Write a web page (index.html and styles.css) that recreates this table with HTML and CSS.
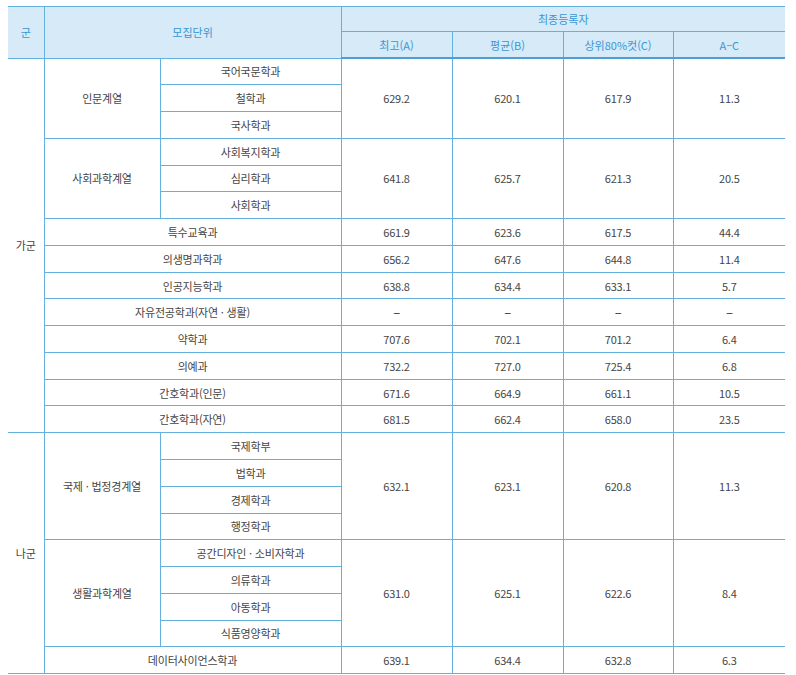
FILE: index.html
```html
<!DOCTYPE html>
<html lang="ko">
<head>
<meta charset="utf-8">
<link rel="stylesheet" href="styles.css">
</head>
<body>
<table class="grid">
  <colgroup>
    <col class="c-gun"><col class="c-series"><col class="c-dept">
    <col class="c-num"><col class="c-num"><col class="c-num2"><col class="c-num3">
  </colgroup>
  <thead>
    <tr class="h1">
      <th rowspan="2" class="first">군</th>
      <th rowspan="2" colspan="2">모집단위</th>
      <th colspan="4" class="last">최종등록자</th>
    </tr>
    <tr class="h2">
      <th>최고(A)</th>
      <th>평균(B)</th>
      <th>상위80%컷(C)</th>
      <th class="last">A–C</th>
    </tr>
  </thead>
  <tbody>
    <tr><td rowspan="14" class="first gun">가군</td><td rowspan="3">인문계열</td><td>국어국문학과</td><td rowspan="3">629.2</td><td rowspan="3">620.1</td><td rowspan="3">617.9</td><td rowspan="3" class="last">11.3</td></tr>
    <tr><td>철학과</td></tr>
    <tr><td>국사학과</td></tr>
    <tr><td rowspan="3">사회과학계열</td><td>사회복지학과</td><td rowspan="3">641.8</td><td rowspan="3">625.7</td><td rowspan="3">621.3</td><td rowspan="3" class="last">20.5</td></tr>
    <tr><td>심리학과</td></tr>
    <tr><td>사회학과</td></tr>
    <tr><td colspan="2">특수교육과</td><td>661.9</td><td>623.6</td><td>617.5</td><td class="last">44.4</td></tr>
    <tr><td colspan="2">의생명과학과</td><td>656.2</td><td>647.6</td><td>644.8</td><td class="last">11.4</td></tr>
    <tr><td colspan="2">인공지능학과</td><td>638.8</td><td>634.4</td><td>633.1</td><td class="last">5.7</td></tr>
    <tr><td colspan="2">자유전공학과(자연 · 생활)</td><td class="dash">–</td><td class="dash">–</td><td class="dash">–</td><td class="dash last">–</td></tr>
    <tr><td colspan="2">약학과</td><td>707.6</td><td>702.1</td><td>701.2</td><td class="last">6.4</td></tr>
    <tr><td colspan="2">의예과</td><td>732.2</td><td>727.0</td><td>725.4</td><td class="last">6.8</td></tr>
    <tr><td colspan="2">간호학과(인문)</td><td>671.6</td><td>664.9</td><td>661.1</td><td class="last">10.5</td></tr>
    <tr><td colspan="2">간호학과(자연)</td><td>681.5</td><td>662.4</td><td>658.0</td><td class="last">23.5</td></tr>
    <tr><td rowspan="9" class="first gun">나군</td><td rowspan="4">국제 · 법정경계열</td><td>국제학부</td><td rowspan="4">632.1</td><td rowspan="4">623.1</td><td rowspan="4">620.8</td><td rowspan="4" class="last">11.3</td></tr>
    <tr><td>법학과</td></tr>
    <tr><td>경제학과</td></tr>
    <tr><td>행정학과</td></tr>
    <tr><td rowspan="4">생활과학계열</td><td>공간디자인 · 소비자학과</td><td rowspan="4">631.0</td><td rowspan="4">625.1</td><td rowspan="4">622.6</td><td rowspan="4" class="last">8.4</td></tr>
    <tr><td>의류학과</td></tr>
    <tr><td>아동학과</td></tr>
    <tr><td>식품영양학과</td></tr>
    <tr><td colspan="2">데이터사이언스학과</td><td>639.1</td><td>634.4</td><td>632.8</td><td class="last">6.3</td></tr>
  </tbody>
</table>
</body>
</html>
```

FILE: styles.css
```css
html, body {
  margin: 0;
  padding: 0;
  background: #ffffff;
}

body {
  font-family: "Noto Sans CJK KR", "Noto Sans", sans-serif;
  font-size: 11px;
  color: #454545;
}

.grid {
  border-collapse: collapse;
  table-layout: fixed;
  width: 777px;
  margin: 6px 0 0 8px;
}

.c-gun { width: 36px; }
.c-series { width: 116px; }
.c-dept { width: 181px; }
.c-num { width: 111px; }
.c-num2 { width: 110px; }
.c-num3 { width: 112px; }

.grid th,
.grid td {
  border: 1px solid #62b1de;
  padding: 0;
  text-align: center;
  vertical-align: middle;
  line-height: 14px;
  white-space: nowrap;
}

.grid th {
  background: #d6eaf8;
  color: #3897d4;
  font-weight: 400;
}

.grid .first { border-left: none; }
.grid .last { border-right: none; }

.h1 th { height: 24px; }
.h2 th { height: 25px; border-bottom: 2px solid #4b9fd6; }

.grid tbody td { height: 25.78px; letter-spacing: -0.2px; }

.grid td.dash { font-size: 13px; color: #333333; }

.grid td.gun { color: #454545; }
```
